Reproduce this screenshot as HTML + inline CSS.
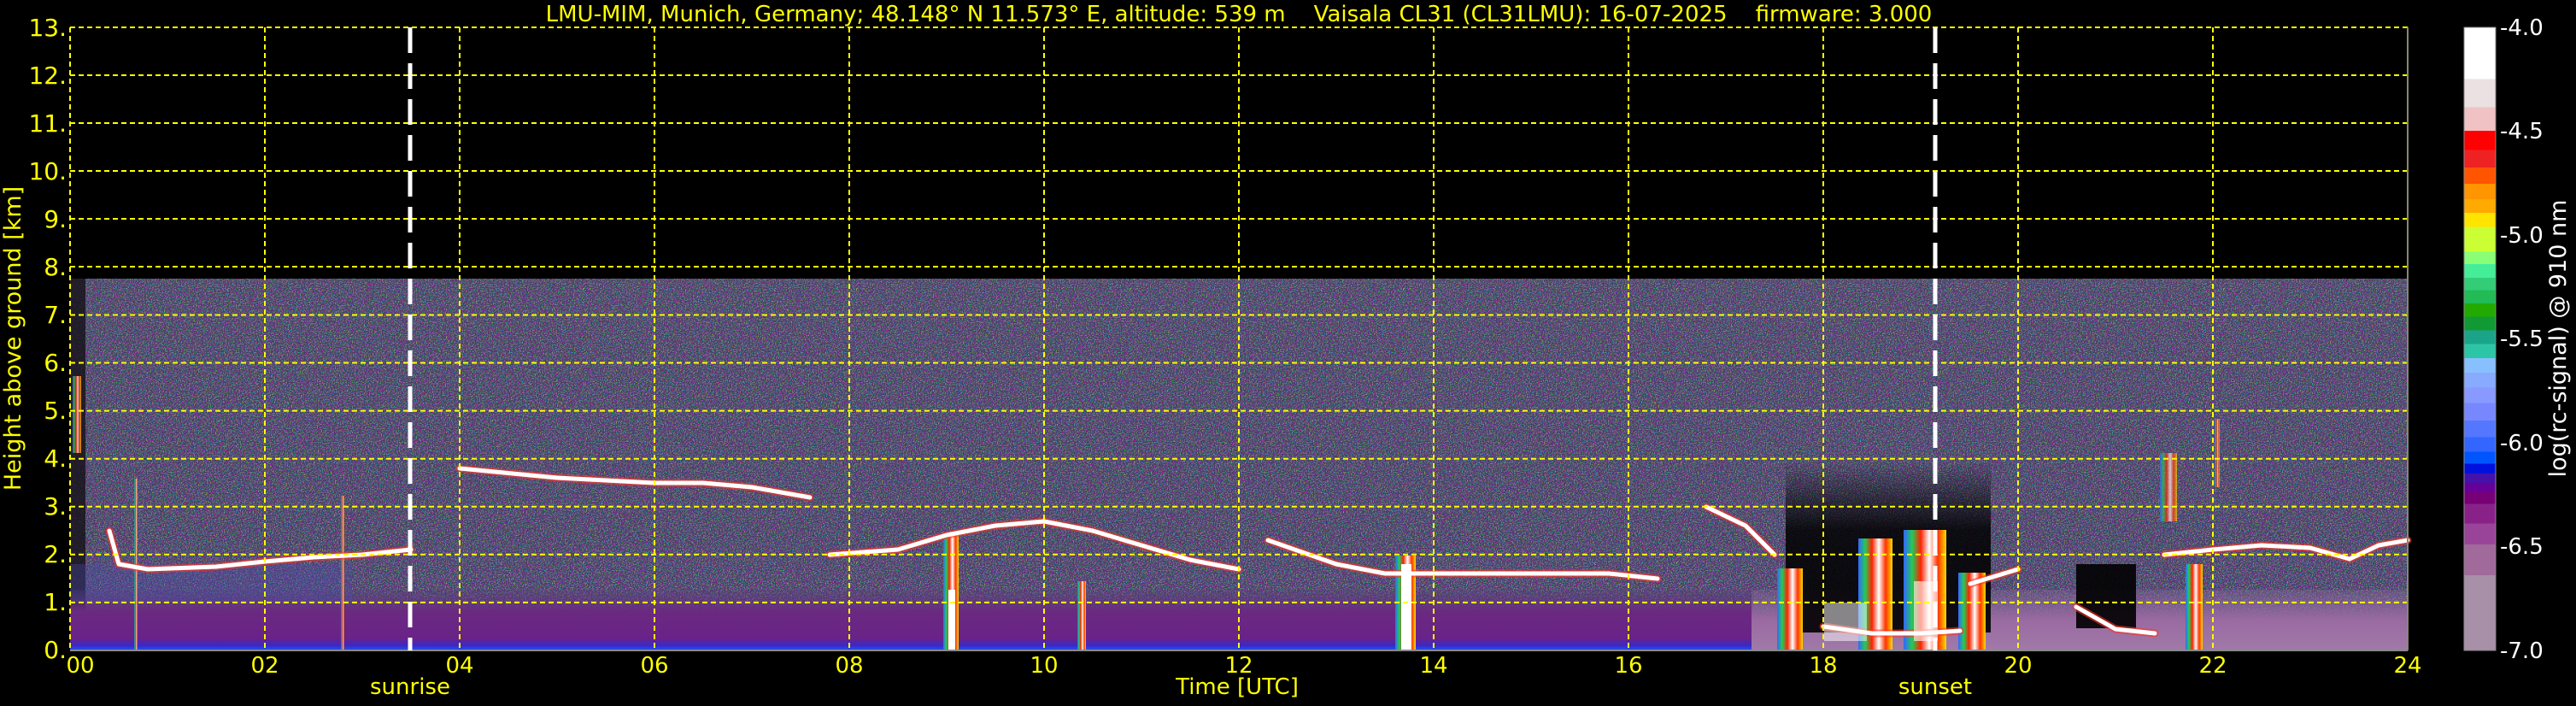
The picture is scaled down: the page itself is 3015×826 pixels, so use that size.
<!DOCTYPE html>
<html><head><meta charset="utf-8"><style>
html,body{margin:0;padding:0;background:#000;}
svg{display:block;}
text{font-family:"DejaVu Sans","Liberation Sans",sans-serif;}
</style></head><body>
<svg width="3015" height="826" viewBox="0 0 3015 826" xmlns="http://www.w3.org/2000/svg">
<defs>
<filter id="speck" x="0" y="0" width="100%" height="100%">
<feTurbulence type="fractalNoise" baseFrequency="0.8" numOctaves="1" seed="3" result="t"/>
<feColorMatrix in="t" type="matrix" values="4 -2 0 0 -0.6  -1 4 -1 0 -0.6  0 -2 4 0 -0.3  0 0 0 6 -2.6"/>
</filter>
<linearGradient id="noise" x1="0" y1="0" x2="0" y2="1">
<stop offset="0" stop-color="#463e5c"/>
<stop offset="0.7" stop-color="#443c5c"/>
<stop offset="1" stop-color="#4a3a66"/>
</linearGradient>
<linearGradient id="low" x1="0" y1="0" x2="0" y2="1">
<stop offset="0" stop-color="#5a3a7a" stop-opacity="0.2"/>
<stop offset="0.35" stop-color="#6a2a80"/>
<stop offset="0.8" stop-color="#6a2288"/>
<stop offset="0.92" stop-color="#3a28c8"/>
<stop offset="1" stop-color="#2255ee"/>
</linearGradient>
<linearGradient id="lowR" x1="0" y1="0" x2="0" y2="1">
<stop offset="0" stop-color="#8a6a9a" stop-opacity="0.3"/>
<stop offset="0.5" stop-color="#9a6aa2"/>
<stop offset="1" stop-color="#a07aa8"/>
</linearGradient>
<linearGradient id="cb" x1="0" y1="0" x2="0" y2="1">
<stop offset="0" stop-color="#ffffff"/><stop offset="0.083" stop-color="#ffffff"/>
<stop offset="0.083" stop-color="#ebe0e2"/><stop offset="0.128" stop-color="#ebe0e2"/>
<stop offset="0.128" stop-color="#f0c2c4"/><stop offset="0.166" stop-color="#f0c2c4"/>
<stop offset="0.166" stop-color="#ff0000"/><stop offset="0.197" stop-color="#ff0000"/>
<stop offset="0.197" stop-color="#ee2222"/><stop offset="0.225" stop-color="#ee2222"/>
<stop offset="0.225" stop-color="#ff5500"/><stop offset="0.251" stop-color="#ff5500"/>
<stop offset="0.251" stop-color="#ff9500"/><stop offset="0.276" stop-color="#ff9500"/>
<stop offset="0.276" stop-color="#ffaa00"/><stop offset="0.298" stop-color="#ffaa00"/>
<stop offset="0.298" stop-color="#ffe400"/><stop offset="0.320" stop-color="#ffe400"/>
<stop offset="0.320" stop-color="#ccff33"/><stop offset="0.360" stop-color="#ccff33"/>
<stop offset="0.360" stop-color="#88ff77"/><stop offset="0.380" stop-color="#88ff77"/>
<stop offset="0.380" stop-color="#44ee99"/><stop offset="0.402" stop-color="#44ee99"/>
<stop offset="0.402" stop-color="#33cc77"/><stop offset="0.422" stop-color="#33cc77"/>
<stop offset="0.422" stop-color="#22bb55"/><stop offset="0.443" stop-color="#22bb55"/>
<stop offset="0.443" stop-color="#22aa00"/><stop offset="0.464" stop-color="#22aa00"/>
<stop offset="0.464" stop-color="#119933"/><stop offset="0.486" stop-color="#119933"/>
<stop offset="0.486" stop-color="#1aa58a"/><stop offset="0.508" stop-color="#1aa58a"/>
<stop offset="0.508" stop-color="#2cc5a5"/><stop offset="0.531" stop-color="#2cc5a5"/>
<stop offset="0.531" stop-color="#88c0ff"/><stop offset="0.554" stop-color="#88c0ff"/>
<stop offset="0.554" stop-color="#88aaff"/><stop offset="0.578" stop-color="#88aaff"/>
<stop offset="0.578" stop-color="#8899ff"/><stop offset="0.603" stop-color="#8899ff"/>
<stop offset="0.603" stop-color="#7788ff"/><stop offset="0.631" stop-color="#7788ff"/>
<stop offset="0.631" stop-color="#5577ff"/><stop offset="0.658" stop-color="#5577ff"/>
<stop offset="0.658" stop-color="#3366ff"/><stop offset="0.681" stop-color="#3366ff"/>
<stop offset="0.681" stop-color="#0055ff"/><stop offset="0.700" stop-color="#0055ff"/>
<stop offset="0.700" stop-color="#0011dd"/><stop offset="0.716" stop-color="#0011dd"/>
<stop offset="0.716" stop-color="#4411aa"/><stop offset="0.731" stop-color="#4411aa"/>
<stop offset="0.731" stop-color="#660099"/><stop offset="0.746" stop-color="#660099"/>
<stop offset="0.746" stop-color="#770077"/><stop offset="0.765" stop-color="#770077"/>
<stop offset="0.765" stop-color="#882288"/><stop offset="0.796" stop-color="#882288"/>
<stop offset="0.796" stop-color="#994499"/><stop offset="0.830" stop-color="#994499"/>
<stop offset="0.830" stop-color="#a06a9a"/><stop offset="0.879" stop-color="#a06a9a"/>
<stop offset="0.879" stop-color="#a890a8"/><stop offset="1" stop-color="#a890a8"/>
</linearGradient>
<linearGradient id="streak" x1="0" y1="0" x2="1" y2="0">
<stop offset="0" stop-color="#3366ff"/><stop offset="0.2" stop-color="#22cc55"/>
<stop offset="0.4" stop-color="#ff2200"/><stop offset="0.6" stop-color="#ffffff"/>
<stop offset="0.8" stop-color="#ff3300"/><stop offset="1" stop-color="#ffdd00"/>
</linearGradient>
<linearGradient id="fade" x1="0" y1="0" x2="0" y2="1">
<stop offset="0" stop-color="#000" stop-opacity="0"/>
<stop offset="0.4" stop-color="#000" stop-opacity="0.85"/>
<stop offset="1" stop-color="#000" stop-opacity="0.9"/>
</linearGradient>
</defs>

<!-- data: noise region 0-7.75 km -->
<rect x="82" y="326" width="2736" height="435" fill="url(#noise)"/>
<rect x="82" y="326" width="2736" height="435" filter="url(#speck)" opacity="0.55"/>
<rect x="82" y="326" width="18" height="435" fill="#141018" opacity="0.8"/>
<!-- low layer -->
<rect x="82" y="690" width="1970" height="71" fill="url(#low)"/>
<rect x="82" y="660" width="330" height="45" fill="#4a4aa8" opacity="0.35"/>
<rect x="2050" y="690" width="768" height="71" fill="url(#lowR)"/>
<!-- dark regions -->
<rect x="2090" y="540" width="240" height="200" fill="url(#fade)"/>
<rect x="2430" y="660" width="70" height="75" fill="#000" opacity="0.9"/>

<!-- streaks -->
<g>
<rect x="1104" y="624" width="18" height="137" fill="url(#streak)"/>
<rect x="1261" y="680" width="10" height="81" fill="url(#streak)"/>
<rect x="1633" y="650" width="24" height="111" fill="url(#streak)"/>
<rect x="2080" y="665" width="30" height="96" fill="url(#streak)"/>
<rect x="2175" y="630" width="40" height="131" fill="url(#streak)"/>
<rect x="2228" y="620" width="50" height="141" fill="url(#streak)"/>
<rect x="2292" y="670" width="32" height="90" fill="url(#streak)"/>
<rect x="2528" y="530" width="20" height="80" fill="url(#streak)" opacity="0.7"/>
<rect x="2558" y="660" width="20" height="101" fill="url(#streak)"/>
<rect x="2592" y="490" width="6" height="80" fill="url(#streak)" opacity="0.7"/>
<rect x="157" y="560" width="4" height="200" fill="url(#streak)" opacity="0.8"/>
<rect x="399" y="580" width="4" height="180" fill="url(#streak)" opacity="0.8"/>
<rect x="85" y="440" width="10" height="90" fill="url(#streak)" opacity="0.8"/>
</g>

<!-- cloud layers -->
<g fill="none" stroke-linejoin="round" stroke-linecap="round">
<g stroke="#ff3322" stroke-width="9" opacity="0.6">
<polyline points="128,621 139,660 173,666 253,663 310,657 367,652 424,649 481,643"/>
<polyline points="538,548 652,559 766,565 823,565 880,570 948,582"/>
<polyline points="971,649 1051,643 1108,626 1165,615 1222,610 1279,621 1336,638 1393,655 1450,666"/>
<polyline points="1484,632 1564,660 1621,671 1678,671 1792,671 1883,671 1940,677"/>
<polyline points="1997,593 2043,615 2077,649"/>
<polyline points="2134,733 2191,741 2248,741 2294,738"/>
<polyline points="2306,683 2362,666"/>
<polyline points="2430,710 2476,736 2522,741"/>
<polyline points="2533,649 2590,643 2647,638 2704,641 2750,654 2784,638 2818,632"/>
</g>
<g stroke="#ffffff" stroke-width="5">
<polyline points="128,621 139,660 173,666 253,663 310,657 367,652 424,649 481,643"/>
<polyline points="538,548 652,559 766,565 823,565 880,570 948,582"/>
<polyline points="971,649 1051,643 1108,626 1165,615 1222,610 1279,621 1336,638 1393,655 1450,666"/>
<polyline points="1484,632 1564,660 1621,671 1678,671 1792,671 1883,671 1940,677"/>
<polyline points="1997,593 2043,615 2077,649"/>
<polyline points="2134,733 2191,741 2248,741 2294,738"/>
<polyline points="2306,683 2362,666"/>
<polyline points="2430,710 2476,736 2522,741"/>
<polyline points="2533,649 2590,643 2647,638 2704,641 2750,654 2784,638 2818,632"/>
</g>
</g>
<rect x="1640" y="660" width="12" height="101" fill="#fff"/>
<rect x="1110" y="690" width="8" height="71" fill="#fff"/>
<rect x="2135" y="705" width="50" height="45" fill="#fff" opacity="0.5"/>
<rect x="2240" y="680" width="28" height="70" fill="#fff" opacity="0.6"/>

<!-- grid -->
<g stroke="#ffff00" stroke-width="2" stroke-dasharray="6,4" fill="none">
<line x1="82" y1="32" x2="2818" y2="32"/>
<line x1="82" y1="88" x2="2818" y2="88"/>
<line x1="82" y1="144" x2="2818" y2="144"/>
<line x1="82" y1="200" x2="2818" y2="200"/>
<line x1="82" y1="256" x2="2818" y2="256"/>
<line x1="82" y1="312" x2="2818" y2="312"/>
<line x1="82" y1="368.5" x2="2818" y2="368.5"/>
<line x1="82" y1="424.5" x2="2818" y2="424.5"/>
<line x1="82" y1="480.6" x2="2818" y2="480.6"/>
<line x1="82" y1="536.7" x2="2818" y2="536.7"/>
<line x1="82" y1="592.8" x2="2818" y2="592.8"/>
<line x1="82" y1="648.8" x2="2818" y2="648.8"/>
<line x1="82" y1="704.9" x2="2818" y2="704.9"/>
<line x1="82" y1="32" x2="82" y2="761"/>
<line x1="310" y1="32" x2="310" y2="761"/>
<line x1="538" y1="32" x2="538" y2="761"/>
<line x1="766" y1="32" x2="766" y2="761"/>
<line x1="994" y1="32" x2="994" y2="761"/>
<line x1="1222" y1="32" x2="1222" y2="761"/>
<line x1="1450" y1="32" x2="1450" y2="761"/>
<line x1="1678" y1="32" x2="1678" y2="761"/>
<line x1="1906" y1="32" x2="1906" y2="761"/>
<line x1="2134" y1="32" x2="2134" y2="761"/>
<line x1="2362" y1="32" x2="2362" y2="761"/>
<line x1="2590" y1="32" x2="2590" y2="761"/>
</g>
<line x1="2818" y1="32" x2="2818" y2="761" stroke="#888870" stroke-width="2"/>
<line x1="82" y1="761" x2="2818" y2="761" stroke="#888" stroke-width="2"/>

<!-- sunrise / sunset -->
<g stroke="#ffffff" stroke-width="5" stroke-dasharray="30,12">
<line x1="480" y1="32" x2="480" y2="761"/>
<line x1="2265" y1="32" x2="2265" y2="761"/>
</g>

<!-- title -->
<text x="1450" y="25" fill="#ffff00" font-size="26" text-anchor="middle" xml:space="preserve">LMU-MIM, Munich, Germany; 48.148° N 11.573° E, altitude: 539 m    Vaisala CL31 (CL31LMU): 16-07-2025    firmware: 3.000</text>

<!-- y ticks -->
<g fill="#ffff00" font-size="28" text-anchor="end">
<text x="78" y="42">13.</text><text x="78" y="98">12.</text><text x="78" y="154">11.</text>
<text x="78" y="210">10.</text><text x="78" y="266">9.</text><text x="78" y="322">8.</text>
<text x="78" y="378">7.</text><text x="78" y="434">6.</text><text x="78" y="490">5.</text>
<text x="78" y="546">4.</text><text x="78" y="602">3.</text><text x="78" y="658">2.</text>
<text x="78" y="714">1.</text><text x="78" y="770">0.</text>
</g>
<text transform="translate(24,396) rotate(-90)" fill="#ffff00" font-size="27" text-anchor="middle">Height above ground [km]</text>

<!-- x ticks -->
<g fill="#ffff00" font-size="26" text-anchor="middle">
<text x="94" y="787">00</text><text x="310" y="787">02</text><text x="538" y="787">04</text>
<text x="766" y="787">06</text><text x="994" y="787">08</text><text x="1222" y="787">10</text>
<text x="1450" y="787">12</text><text x="1678" y="787">14</text><text x="1906" y="787">16</text>
<text x="2134" y="787">18</text><text x="2362" y="787">20</text><text x="2590" y="787">22</text>
<text x="2818" y="787">24</text>
<text x="480" y="812">sunrise</text>
<text x="1448" y="812">Time [UTC]</text>
<text x="2265" y="812">sunset</text>
</g>

<!-- colorbar -->
<rect x="2884" y="32" width="37" height="729" fill="url(#cb)"/>
<rect x="2884" y="32" width="37" height="729" fill="none" stroke="#888" stroke-width="1"/>
<g fill="#ffffff" font-size="26">
<text x="2926" y="41">-4.0</text>
<text x="2926" y="162">-4.5</text>
<text x="2926" y="284">-5.0</text>
<text x="2926" y="405">-5.5</text>
<text x="2926" y="527">-6.0</text>
<text x="2926" y="648">-6.5</text>
<text x="2926" y="770">-7.0</text>
</g>
<text transform="translate(3003,396) rotate(-90)" fill="#ffffff" font-size="27" text-anchor="middle">log(rc-signal) @ 910 nm</text>
</svg>
</body></html>
